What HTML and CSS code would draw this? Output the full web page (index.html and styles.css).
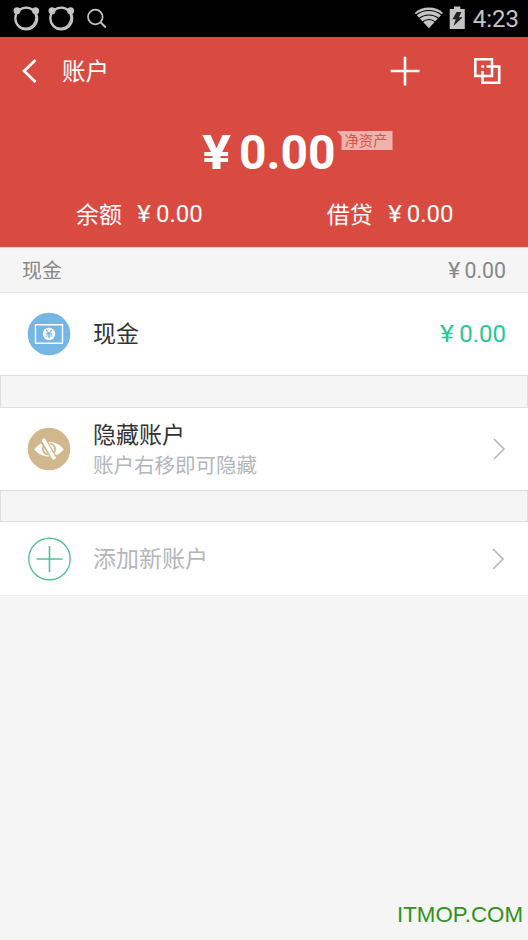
FILE: index.html
```html
<!DOCTYPE html>
<html lang="zh-CN">
<head>
<meta charset="utf-8">
<title>账户</title>
<link rel="stylesheet" href="styles.css">
</head>
<body>
<div class="status">
  <svg class="status-left" width="110" height="37" viewBox="0 0 110 37" fill="none" stroke="#c4c4c4">
    <g id="bear">
      <circle cx="26.300" cy="18.500" r="10.900" stroke-width="2.200"/>
      <circle cx="25.500" cy="17.800" r="10.300" stroke-width="1.200"/>
      <circle cx="17" cy="10.800" r="3.500" fill="#c4c4c4" stroke="none"/>
      <circle cx="35.600" cy="10.800" r="3.500" fill="#c4c4c4" stroke="none"/>
    </g>
    <use href="#bear" x="35"/>
    <circle cx="95.300" cy="17" r="7.300" stroke-width="1.700"/>
    <path d="M100.300 22l5.500 5.500" stroke-width="1.900"/>
  </svg>
  <div class="status-right">
    <svg width="56" height="37" viewBox="0 0 56 37">
      <path d="M4.700 13C12 5.700 26 5.700 33 13L18.900 28.300Z" fill="#c4c4c4"/>
      <path d="M6 15c7.500-6 18.300-6 25.800 0M9 18.500c6-4.700 13.800-4.700 19.800 0M12.300 22c4-3 9.200-3 13.200 0" fill="none" stroke="#000" stroke-width="1.100"/>
      <path d="M39.700 9H44V6.500h6.300V9h4.500v20H39.700z" fill="#c4c4c4"/>
      <path d="M46.500 12h5l-2.500 5.300h3.700L43.500 26l2.200-6.700H42.500z" fill="#222"/>
    </svg>
    <span class="time">4:23</span>
  </div>
</div>
<header class="header">
  <div class="nav">
    <svg class="back" width="18" height="28" viewBox="0 0 18 28"><path d="M16.500 3L5 14 16.500 25" fill="none" stroke="#fff" stroke-width="2.700"/></svg>
    <h1 class="title">账户</h1>
    <svg class="plus" width="30" height="30" viewBox="0 0 30 30"><path d="M15 .7v28.800M.7 15h28.800" stroke="#fff" stroke-width="2.600"/></svg>
    <svg class="copy" width="28" height="28" viewBox="0 0 28 28" fill="none" stroke="#fff" stroke-width="2.600">
      <path d="M2.300 2.300h16.700v16.700H2.300z"/>
      <path d="M13.500 9.500h12.700v16.200H9.500V14"/>
      <path d="M8.200 9.500h2.800"/>
    </svg>
  </div>
  <div class="net"><span class="net-yen">¥</span><span class="net-value">0.00</span><span class="tag">净资产</span></div>
  <div class="sums">
    <div class="sum"><span class="label">余额</span><span class="money"><span class="yen">¥</span>0.00</span></div>
    <div class="sum"><span class="label">借贷</span><span class="money"><span class="yen">¥</span>0.00</span></div>
  </div>
</header>
<main>
  <div class="section"><span class="label">现金</span><span class="section-money"><span class="yen">¥</span>0.00</span></div>
  <div class="row cash">
    <svg class="icon" width="44" height="44" viewBox="0 0 44 44">
      <circle cx="22" cy="22" r="21.300" fill="#74b7e4"/>
      <path d="M8.500 12.800h27v18.400h-27z" fill="none" stroke="#fff" stroke-width="1.400"/>
      <circle cx="22" cy="22" r="6.200" fill="#fff"/>
      <path d="M19.300 18.200l2.700 3.500 2.700-3.500M22 21.500v4.700M18.800 21.800h6.400M18.800 24h6.400" fill="none" stroke="#74b7e4" stroke-width="1.200"/>
    </svg>
    <span class="name">现金</span><span class="money green"><span class="yen">¥</span>0.00</span>
  </div>
  <div class="gap"></div>
  <div class="row hidden-row">
    <svg class="icon" width="44" height="44" viewBox="0 0 44 44">
      <circle cx="22" cy="22" r="21.300" fill="#d1b78d"/>
      <path d="M7.300 22.300C14.500 12.500 29.500 12.500 36.700 22.300 29.500 32 14.500 32 7.300 22.300z" fill="#fff"/>
      <path d="M17.500 18a5.600 5.600 0 0 0 3.500 9.500M23 16.500a5.600 5.600 0 0 1 3.500 9.500" fill="none" stroke="#d1b78d" stroke-width="1.700"/>
      <path d="M15 11l13 22" stroke="#d1b78d" stroke-width="6.500"/>
      <path d="M16 12l11.500 20" stroke="#fff" stroke-width="3.600"/>
    </svg>
    <div class="texts"><span class="name">隐藏账户</span><span class="hint">账户右移即可隐藏</span></div>
    <svg class="chevron" width="14" height="24" viewBox="0 0 14 24"><path d="M2 2l10 10L2 22" fill="none" stroke="#b7b7b7" stroke-width="1.600"/></svg>
  </div>
  <div class="gap second"></div>
  <div class="row add">
    <svg class="icon" width="44" height="44" viewBox="0 0 44 44" fill="none" stroke="#55c193"><circle cx="22.500" cy="22" r="20.700" stroke-width="1.400"/><path d="M22.500 9v26M9.500 22h26" stroke-width="1.600"/></svg>
    <span class="name muted">添加新账户</span>
    <svg class="chevron" width="14" height="24" viewBox="0 0 14 24"><path d="M2 2l10 10L2 22" fill="none" stroke="#b7b7b7" stroke-width="1.600"/></svg>
  </div>
</main>
<footer class="mark">ITMOP.COM</footer>
</body>
</html>
```
FILE: styles.css
```css
* { box-sizing: border-box; }
body {
  margin: 0;
  height: 940px;
  display: flex;
  flex-direction: column;
  background: #f5f5f5;
  color: #333;
  font-family: Roboto, "Noto Sans CJK SC", sans-serif;
  overflow: hidden;
}
svg { display: block; flex: none; }
span { white-space: nowrap; }
.status {
  height: 37px;
  background: #000;
  display: flex;
  justify-content: space-between;
}
.status-right { display: flex; padding-right: 9px; }
.time { font-size: 24px; line-height: 38px; color: #c4c4c4; margin-left: 7px; }
.header { height: 210px; background: #d94b41; color: #fff; }
.nav {
  height: 68px;
  padding: 0 27px 0 19px;
  display: flex;
  align-items: center;
}
.title { margin: 0 auto 0 25px; padding-top: 2px; font-size: 23.5px; font-weight: 400; line-height: 34px; }
.plus { margin-right: 53px; }
.net {
  display: flex;
  height: 84px;
  padding-left: 202px;
  font-size: 48px;
  font-weight: 700;
  line-height: 95px;
}
.net-yen { width: 37px; transform: scaleX(1.13); transform-origin: left; }
.tag {
  margin: 26px 0 0 1px;
  padding-left: 8px;
  width: 56px;
  height: 19px;
  background: #f1b1ac;
  color: #dc5449;
  clip-path: polygon(0 0, 100% 0, 100% 100%, 5px 100%, 5px 5px);
  font-size: 14.3px;
  font-weight: 400;
  line-height: 20px;
}
.sums { display: flex; gap: 124px; padding-left: 76px; }
.sum { display: flex; font-size: 23px; line-height: 50px; }
.sum .label { padding-top: 2px; }
.sum .money { margin-left: 15px; }
.money { font-size: 24px; line-height: 50px; display: flex; }
.yen { width: 19px; transform: scaleX(1.1); transform-origin: left; }
.section {
  height: 46px;
  padding: 0 22px;
  display: flex;
  justify-content: space-between;
  border-top: 1px solid #eed5d3;
  border-bottom: 1px solid #e4e4e4;
  color: #888;
  font-size: 20px;
  line-height: 45px;
}
.section .label { padding-top: 1px; }
.section-money { display: flex; font-size: 21.3px; }
.section-money .yen { width: 16px; }
.row { display: flex; align-items: center; background: #fff; padding: 0 22px 0 27px; }
.cash { height: 82px; }
.hidden-row { height: 82px; }
.add { height: 74px; border-bottom: 1px solid #ececec; }
.icon { margin-right: 22px; }
.name { padding-top: 2px; font-size: 23px; line-height: 32px; }
.green { margin-left: auto; color: #28c795; }
.gap { height: 33px; border: 1px solid #dedede; }
.second { height: 32px; }
.texts { display: flex; flex-direction: column; }
.hint { font-size: 20.5px; line-height: 28px; color: #b3b6bb; }
.chevron { margin-left: auto; }
.add .chevron { margin-right: 1px; }
.muted { padding-top: 3px; color: #b3b6bb; }
.mark {
  margin: auto 5px 10px auto;
  font: 22.3px/30px "Liberation Sans", sans-serif;
  color: #2f9220;
}
```
